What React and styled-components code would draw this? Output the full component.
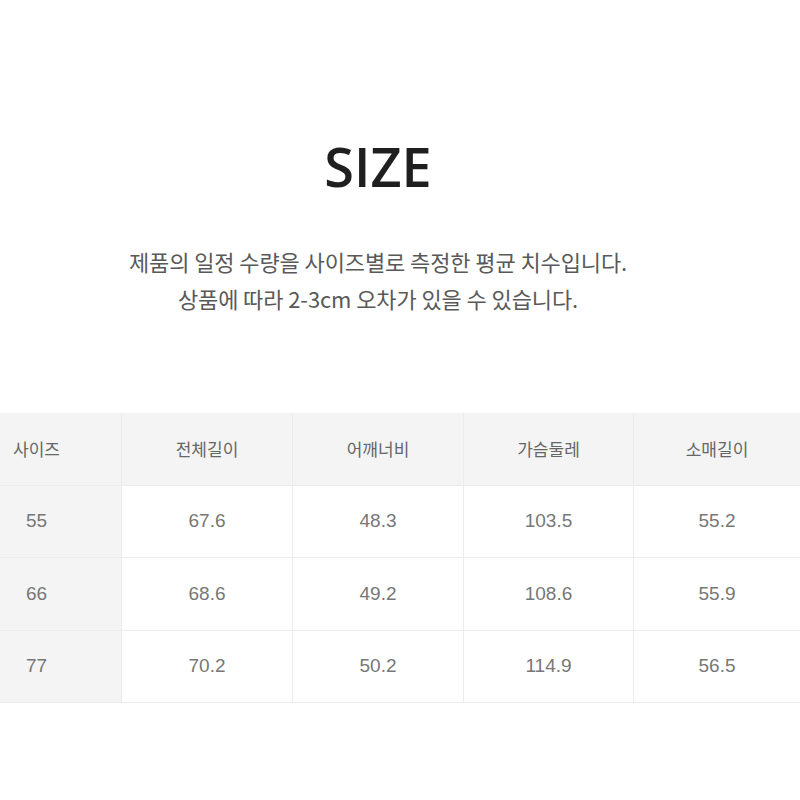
import React from "react";
import styled, { createGlobalStyle } from "styled-components";

const GlobalStyle = createGlobalStyle`
  html, body {
    margin: 0;
    padding: 0;
    background: #ffffff;
  }
  body {
    font-family: "Noto Sans", "Noto Sans CJK KR", sans-serif;
  }
`;

const Page = styled.div`
  width: 800px;
  height: 800px;
  display: flex;
  flex-flow: column nowrap;
  background: #ffffff;
  overflow: hidden;
`;

const Intro = styled.header`
  display: flex;
  flex-flow: column nowrap;
  align-items: center;
  box-sizing: border-box;
  padding: 131px 44px 0 0;
  height: 413px;
`;

const Title = styled.h1`
  margin: 0;
  font-family: "Open Sans", "Noto Sans", sans-serif;
  font-weight: 600;
  font-size: 54px;
  line-height: 70px;
  color: #1f1f1f;
`;

const Notes = styled.div`
  margin-top: 42px;
  display: flex;
  flex-flow: column nowrap;
  align-items: center;

  p {
    margin: 0;
    font-family: "Noto Sans CJK KR", "Noto Sans", sans-serif;
    font-size: 22px;
    line-height: 37px;
    color: #595959;
    letter-spacing: -0.1px;
  }
`;

const Table = styled.div`
  display: grid;
  grid-template-columns: 122px 171px 171px 170px 1fr;
  grid-auto-rows: 72.5px;
`;

const Cell = styled.div`
  display: flex;
  align-items: center;
  justify-content: center;
  box-sizing: border-box;
  font-family: ${({ $head }) =>
    $head ? `"Noto Sans CJK KR", "Noto Sans", sans-serif` : `"Liberation Sans", Arial, sans-serif`};
  font-size: ${({ $head }) => ($head ? "17px" : "19px")};
  color: ${({ $head }) => ($head ? "#666666" : "#777777")};
  background: ${({ $shade }) => ($shade ? "#f4f4f4" : "#ffffff")};
  border-bottom: 1px solid #ececec;
  border-right: 1px solid #ececec;
  padding-right: ${({ $first }) => ($first ? "48px" : "0")};

  &:nth-child(5n) {
    border-right: none;
  }
`;

const headers = ["사이즈", "전체길이", "어깨너비", "가슴둘레", "소매길이"];

const rows = [
  ["55", "67.6", "48.3", "103.5", "55.2"],
  ["66", "68.6", "49.2", "108.6", "55.9"],
  ["77", "70.2", "50.2", "114.9", "56.5"],
];

const App = () => {
  return (
    <Page>
      <GlobalStyle />
      <Intro>
        <Title>SIZE</Title>
        <Notes>
          <p>제품의 일정 수량을 사이즈별로 측정한 평균 치수입니다.</p>
          <p>상품에 따라 2-3cm 오차가 있을 수 있습니다.</p>
        </Notes>
      </Intro>
      <Table>
        {headers.map((h, i) => (
          <Cell key={h} $head $shade $first={i === 0}>
            {h}
          </Cell>
        ))}
        {rows.map((row, r) =>
          row.map((v, i) => (
            <Cell key={`${r}-${i}`} $shade={i === 0} $first={i === 0}>
              {v}
            </Cell>
          ))
        )}
      </Table>
    </Page>
  );
};

export default App;
